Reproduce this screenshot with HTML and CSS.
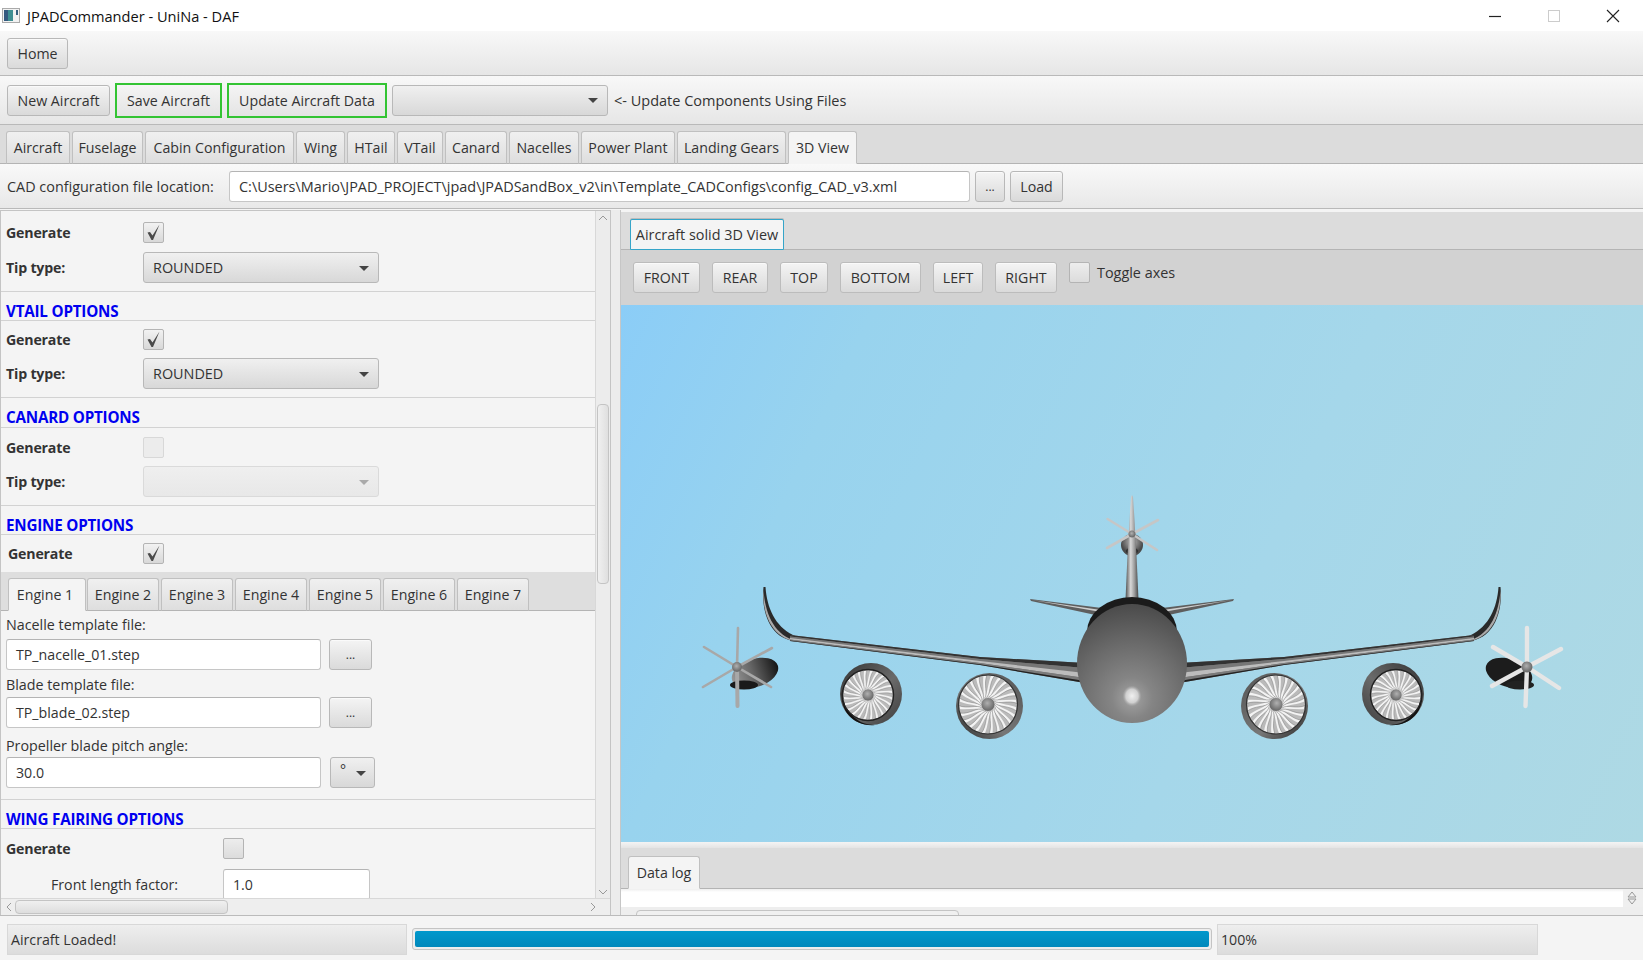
FILE: index.html
```html
<!DOCTYPE html>
<html lang="en">
<head>
<meta charset="utf-8">
<title>JPADCommander - UniNa - DAF</title>
<link rel="stylesheet" href="styles.css">
</head>
<body>
<div class="app">
  <header class="titlebar">
    <svg class="app-icon" width="18" height="15" viewBox="0 0 18 15"><rect x=".5" y=".5" width="17" height="14" fill="#f2f2f2" stroke="#aaa"/><rect x="2" y="2" width="9" height="11" fill="#3f8f92"/><rect x="2" y="2" width="4" height="11" fill="#34597f"/><rect x="14" y="2" width="2" height="5" fill="#36607f"/></svg>
    <span class="title-text">JPADCommander - UniNa - DAF</span>
    <div class="window-controls">
      <svg width="14" height="14" viewBox="0 0 14 14"><path d="M1 7.5h12" stroke="#222" stroke-width="1.2"/></svg>
      <svg width="14" height="14" viewBox="0 0 14 14"><rect x="1.5" y="1.5" width="11" height="11" fill="none" stroke="#ccc"/></svg>
      <svg width="14" height="14" viewBox="0 0 14 14"><path d="M1 1l12 12M13 1L1 13" stroke="#222" stroke-width="1.1"/></svg>
    </div>
  </header>

  <div class="bar bar-home"><button class="btn">Home</button></div>

  <div class="bar bar-actions">
    <button class="btn btn-new">New Aircraft</button>
    <button class="btn btn-green">Save Aircraft</button>
    <button class="btn btn-green">Update Aircraft Data</button>
    <div class="combo combo-files"><span class="arrow"></span></div>
    <span class="hint">&lt;- Update Components Using Files</span>
  </div>

  <nav class="tabbar main-tabs">
    <span class="tab t-aircraft">Aircraft</span><span class="tab t-fuselage">Fuselage</span><span class="tab t-cabin">Cabin Configuration</span><span class="tab t-wing">Wing</span><span class="tab t-htail">HTail</span><span class="tab t-vtail">VTail</span><span class="tab t-canard">Canard</span><span class="tab t-nacelles">Nacelles</span><span class="tab t-power">Power Plant</span><span class="tab t-gears">Landing Gears</span><span class="tab tab-active t-3d">3D View</span>
  </nav>

  <div class="bar bar-file">
    <span class="file-label">CAD configuration file location:</span>
    <div class="field file-field">C:\Users\Mario\JPAD_PROJECT\jpad\JPADSandBox_v2\in\Template_CADConfigs\config_CAD_v3.xml</div>
    <button class="btn btn-dots">...</button>
    <button class="btn btn-load">Load</button>
  </div>

  <main class="workspace">
    <section class="left-pane">
      <div class="left-view">
        <div class="left-content">
          <div class="group g-first">
            <div class="row"><b class="lbl">Generate</b><span class="check on"><svg width="19" height="19" viewBox="0 0 19 19"><path d="M3.500 9.500L6 9l2.500 3.500L15.500 1.500 9 17H7.500z" fill="#4a4a4a"/></svg></span></div>
            <div class="row"><b class="lbl">Tip type:</b><div class="combo combo-tip">ROUNDED<span class="arrow"></span></div></div>
          </div>
          <h3 class="head">VTAIL OPTIONS</h3>
          <div class="group g-vtail">
            <div class="row"><b class="lbl">Generate</b><span class="check on"><svg width="19" height="19" viewBox="0 0 19 19"><path d="M3.500 9.500L6 9l2.500 3.500L15.500 1.500 9 17H7.500z" fill="#4a4a4a"/></svg></span></div>
            <div class="row"><b class="lbl">Tip type:</b><div class="combo combo-tip">ROUNDED<span class="arrow"></span></div></div>
          </div>
          <h3 class="head head-tall">CANARD OPTIONS</h3>
          <div class="group g-canard">
            <div class="row"><b class="lbl">Generate</b><span class="check off"></span></div>
            <div class="row"><b class="lbl">Tip type:</b><div class="combo combo-tip disabled"><span class="arrow"></span></div></div>
          </div>
          <h3 class="head">ENGINE OPTIONS</h3>
          <div class="group g-engine">
            <div class="row"><b class="lbl lbl-engine">Generate</b><span class="check on"><svg width="19" height="19" viewBox="0 0 19 19"><path d="M3.500 9.500L6 9l2.500 3.500L15.500 1.500 9 17H7.500z" fill="#4a4a4a"/></svg></span></div>
          </div>
          <div class="tabbar engine-tabs">
            <span class="tab tab-active e1">Engine 1</span><span class="tab e">Engine 2</span><span class="tab e">Engine 3</span><span class="tab e">Engine 4</span><span class="tab e">Engine 5</span><span class="tab e">Engine 6</span><span class="tab e">Engine 7</span>
          </div>
          <div class="engine-body">
            <div class="cap cap-first">Nacelle template file:</div>
            <div class="pick"><div class="field engine-field">TP_nacelle_01.step</div><button class="btn btn-more">...</button></div>
            <div class="cap">Blade template file:</div>
            <div class="pick"><div class="field engine-field">TP_blade_02.step</div><button class="btn btn-more">...</button></div>
            <div class="cap cap-pitch">Propeller blade pitch angle:</div>
            <div class="pick"><div class="field engine-field">30.0</div><div class="combo combo-unit">°<span class="arrow"></span></div></div>
          </div>
          <h3 class="head">WING FAIRING OPTIONS</h3>
          <div class="group g-fairing">
            <div class="row fair-row"><b class="lbl">Generate</b><span class="check plain"></span></div>
            <div class="row fair-row"><span class="lbl-indent">Front length factor:</span><div class="field fair-field">1.0</div></div>
          </div>
        </div>
        <div class="vbar">
          <svg class="sb-arrow" width="14" height="12" viewBox="0 0 14 12"><path d="M3 8l4-4 4 4" fill="none" stroke="#999" stroke-width="1"/></svg>
          <div class="vtrack"><div class="vthumb"></div></div>
          <svg class="sb-arrow" width="14" height="12" viewBox="0 0 14 12"><path d="M3 4l4 4 4-4" fill="none" stroke="#999" stroke-width="1"/></svg>
        </div>
      </div>
      <div class="hbar">
        <svg width="10" height="14" viewBox="0 0 10 14"><path d="M8 3L4 7l4 4" fill="none" stroke="#999"/></svg>
        <div class="hthumb"></div>
        <svg class="hbar-right" width="10" height="14" viewBox="0 0 10 14"><path d="M3 3l4 4-4 4" fill="none" stroke="#999"/></svg>
      </div>
    </section>

    <div class="splitter"></div>

    <section class="right-pane">
      <div class="tabbar view-tabs"><span class="tab tab-focus">Aircraft solid 3D View</span></div>
      <div class="view-tools">
        <button class="btn v-front">FRONT</button>
        <button class="btn v-rear">REAR</button>
        <button class="btn v-top">TOP</button>
        <button class="btn v-bottom">BOTTOM</button>
        <button class="btn v-left">LEFT</button>
        <button class="btn v-right">RIGHT</button>
        <span class="check plain toggle"></span>
        <span class="toggle-label">Toggle axes</span>
      </div>
      <div class="canvas">
        <svg class="plane" width="1022" height="537" viewBox="621 305 1022 537" xmlns="http://www.w3.org/2000/svg">
          <defs>
            <radialGradient id="bodyG" gradientUnits="userSpaceOnUse" cx="1132" cy="698" r="92">
              <stop offset="0" stop-color="#a4a4a4"/><stop offset=".22" stop-color="#858585"/><stop offset=".6" stop-color="#6a6a6a"/><stop offset="1" stop-color="#4c4c4c"/>
            </radialGradient>
            <radialGradient id="spot"><stop offset="0" stop-color="#f0f0f0"/><stop offset=".65" stop-color="#d0d0d0"/><stop offset="1" stop-color="#aaa" stop-opacity="0"/></radialGradient>
            <radialGradient id="hubG" cx=".45" cy=".4"><stop offset="0" stop-color="#b0b0b0"/><stop offset="1" stop-color="#6e6e6e"/></radialGradient>
            <radialGradient id="nacTop" cx=".5" cy=".35"><stop offset="0" stop-color="#bbb"/><stop offset="1" stop-color="#4a4a4a"/></radialGradient>
            <linearGradient id="finG" x1="0" x2="1" y1="0" y2="0"><stop offset="0" stop-color="#4c4c4c"/><stop offset=".4" stop-color="#d8d8d8"/><stop offset=".7" stop-color="#999"/><stop offset="1" stop-color="#444"/></linearGradient>
            <linearGradient id="cowl" x1="0" x2="1" y1="0" y2="1"><stop offset="0" stop-color="#333"/><stop offset=".55" stop-color="#6a6a6a"/><stop offset="1" stop-color="#3c3c3c"/></linearGradient>
            <linearGradient id="cowlOuter" x1="1" x2="0" y1="0" y2="1"><stop offset="0" stop-color="#555"/><stop offset=".6" stop-color="#777"/><stop offset="1" stop-color="#2a2a2a"/></linearGradient>
            <linearGradient id="propNac" x1="0" x2="1" y1="0" y2="0"><stop offset="0" stop-color="#999"/><stop offset=".45" stop-color="#666"/><stop offset="1" stop-color="#151515"/></linearGradient>
            <filter id="soft" x="-5%" y="-20%" width="110%" height="140%"><feGaussianBlur stdDeviation=".6"/></filter>
            <clipPath id="wingClip"><path d="M1085 663L980 657L790 635L790 641L980 665L1085 683Z"/></clipPath>
            <path id="blade" d="M0-6C5-8 5-17 12-22.500L15-20.500C9-16 6-10 0-6Z" fill="#bababa"/>
            <path id="bladeEdge" d="M0-6C5-8 5-17 12-22.500" fill="none" stroke="#777" stroke-width=".4"/>
            <g id="bladeFull"><use href="#blade"/><use href="#bladeEdge"/></g>
            <g id="fan">
              <circle r="25" fill="#f3f3f3"/>
              <use href="#bladeFull"/><use href="#bladeFull" transform="rotate(15)"/><use href="#bladeFull" transform="rotate(30)"/><use href="#bladeFull" transform="rotate(45)"/><use href="#bladeFull" transform="rotate(60)"/><use href="#bladeFull" transform="rotate(75)"/><use href="#bladeFull" transform="rotate(90)"/><use href="#bladeFull" transform="rotate(105)"/><use href="#bladeFull" transform="rotate(120)"/><use href="#bladeFull" transform="rotate(135)"/><use href="#bladeFull" transform="rotate(150)"/><use href="#bladeFull" transform="rotate(165)"/><use href="#bladeFull" transform="rotate(180)"/><use href="#bladeFull" transform="rotate(195)"/><use href="#bladeFull" transform="rotate(210)"/><use href="#bladeFull" transform="rotate(225)"/><use href="#bladeFull" transform="rotate(240)"/><use href="#bladeFull" transform="rotate(255)"/><use href="#bladeFull" transform="rotate(270)"/><use href="#bladeFull" transform="rotate(285)"/><use href="#bladeFull" transform="rotate(300)"/><use href="#bladeFull" transform="rotate(315)"/><use href="#bladeFull" transform="rotate(330)"/><use href="#bladeFull" transform="rotate(345)"/>
              <circle r="6" fill="url(#hubG)" stroke="#d0d0d0" stroke-width=".6"/>
            </g>
            <g id="leftSide">
              <!-- winglet -->
              <path d="M763.500 587C761 612 770 637 793 641L795 641L795 636L793 635C775 626 767 608 765.500 587Z" fill="#2a2a2a"/>
              <path d="M763.500 590C762 612 771 636 793 641L793 640C773 633 765 612 763.500 590Z" fill="#aaa"/>
              <!-- tailplane -->
              <path d="M1030 599L1031 601L1100 616L1102 608Z" fill="#5e5e5e"/>
              <path d="M1032 600L1101 612L1101 610Z" fill="#cfcfcf"/>
              <!-- wing bands -->
              <path d="M1085 663L980 657L790 635L790 641L980 665L1085 683Z" fill="#777"/>
              <g clip-path="url(#wingClip)"><g filter="url(#soft)">
                <path d="M1085 660L980 655L790 634L790 636.500L980 659L1085 668Z" fill="#333"/>
                <path d="M1085 668L980 659L790 636.500L790 638L980 661L1085 673Z" fill="#767676"/>
                <path d="M1085 673L980 661L790 638L790 639.500L980 663L1085 678Z" fill="#bcbcbc"/>
                <path d="M1085 678L980 663L790 639.500L790 640.400L980 664.200L1085 681Z" fill="#7a7a7a"/>
                <path d="M1085 681L980 664.200L790 640.400L790 642L980 666L1085 685Z" fill="#222"/>
              </g></g>
              <!-- outer engine -->
              <ellipse cx="871" cy="694" rx="31" ry="31" fill="url(#cowl)"/>
              <path d="M842 690C839 712 855 727 875 725C855 725 845 710 845 692Z" fill="#111"/>
              <use href="#fan" transform="translate(868 695)"/>
              <circle cx="868" cy="695" r="25.500" fill="none" stroke="#222" stroke-width="1.400"/>
              <!-- inner engine -->
              <ellipse cx="989.500" cy="706" rx="33.500" ry="33" fill="url(#cowlOuter)"/>
              <use href="#fan" transform="translate(988 704.500) scale(1.160)"/>
              <circle cx="988" cy="704.500" r="29.500" fill="none" stroke="#333" stroke-width="1.200"/>
            </g>
          </defs>
          <use href="#leftSide"/>
          <use href="#leftSide" transform="translate(2264 0) scale(-1 1)"/>

          <!-- top prop nacelle, fin, blades -->
          <circle cx="1132" cy="545" r="11" fill="url(#nacTop)"/>
          <ellipse cx="1132" cy="551" rx="6" ry="3.500" fill="#2a2a2a"/>
          <path d="M1125.500 600L1127.500 555L1129.500 520L1131 497L1132 495L1133 497L1134.500 520L1136.500 555L1138.500 600Z" fill="url(#finG)"/>
          <g stroke="#c6c6c6" stroke-linecap="round" stroke-width="2.600">
            <path d="M1132 534L1107.600 519M1132 534L1158 520M1132 534L1107 548M1132 534L1157 550"/>
          </g>
          <circle cx="1132" cy="534" r="3.500" fill="url(#hubG)"/>
          <!-- fuselage -->
          <ellipse cx="1132" cy="632" rx="45" ry="35" fill="#1b1b1b"/>
          <ellipse cx="1132" cy="663.500" rx="55" ry="59.500" fill="url(#bodyG)"/>
          <ellipse cx="1132" cy="696" rx="9.500" ry="10.500" fill="url(#spot)"/>

          <!-- left prop -->
          <ellipse cx="755" cy="673" rx="24" ry="14" transform="rotate(-18 755 673)" fill="url(#propNac)"/>
          <ellipse cx="744" cy="685" rx="14" ry="4.500" fill="#1a1a1a"/>
          <g stroke="#a8a8a8" stroke-linecap="round" stroke-width="2.600">
            <path d="M737 667L738 628M737 667L704 647M737 667L772 648M737 667L703 687M737 667L771 687"/>
            <path d="M737 667L737.500 706" stroke-width="4"/>
          </g>
          <circle cx="737" cy="667" r="5" fill="url(#hubG)"/>

          <!-- right prop -->
          <ellipse cx="1509" cy="673" rx="24" ry="14" transform="rotate(18 1509 673)" fill="#1c1c1c"/>
          <ellipse cx="1520" cy="685" rx="14" ry="4.500" fill="#222"/>
          <g stroke="#e6e6e6" stroke-linecap="round" stroke-width="4.400">
            <path d="M1527 667L1527 628M1527 667L1561 649M1527 667L1559 688M1527 667L1525.500 706M1527 667L1492 686M1527 667L1493 647"/>
          </g>
          <circle cx="1527" cy="667" r="5.500" fill="url(#hubG)"/>
        </svg>
      </div>
      <div class="canvas-foot"></div>
      <div class="tabbar log-tabs"><span class="tab tab-active">Data log</span></div>
      <div class="log-body">
        <div class="log-white"></div>
        <svg class="log-spin" width="14" height="18" viewBox="0 0 14 18"><path d="M7 3l4 5H3zM7 15l4-5H3z" fill="none" stroke="#999"/></svg>
      </div>
      <div class="log-hbar"><div class="log-thumb"></div></div>
    </section>
  </main>

  <footer class="statusbar">
    <div class="status-msg">Aircraft Loaded!</div>
    <div class="progress"><div class="progress-fill"></div></div>
    <div class="status-pct">100%</div>
  </footer>
</div>
</body>
</html>
```

FILE: styles.css
```css
* { box-sizing: border-box; }
html, body { margin: 0; height: 100%; overflow: hidden; }
body { font-family: "Open Sans", "Liberation Sans", sans-serif; font-size: 14.200px; color: #333; background: #f4f4f4; }
.app { width: 1643px; height: 960px; display: flex; flex-direction: column; }

.titlebar { height: 31px; flex: none; background: #fff; display: flex; align-items: center; padding-left: 2px; color: #111; }
.app-icon { flex: none; }
.title-text { margin-left: 7px; font-size: 14.600px; }
.window-controls { margin-left: auto; display: flex; gap: 45px; padding-right: 23px; }

.bar { flex: none; display: flex; align-items: center; background: linear-gradient(#f8f8f8, #e6e6e6); border-bottom: 1px solid #b9b9b9; padding-left: 7px; }
.bar-home { height: 45px; }
.bar-actions { height: 49px; }
.bar-file { height: 45px; background: linear-gradient(#f9f9f9, #e8e8e8); }

.btn { font: inherit; color: #333; height: 31px; padding: 0; border: 1px solid #b8b8b8; border-radius: 3px; background: linear-gradient(#f4f4f4, #dadada); box-shadow: inset 0 1px 0 #fafafa; text-align: center; }
.bar-home .btn { width: 61px; }
.btn-new { width: 103px; }
.btn-green { height: 35px; margin-left: 5px; border: 2px solid #33c433; border-radius: 0; background: linear-gradient(#f4f4f4, #e4e4e4); box-shadow: none; }
.btn-green:nth-of-type(2) { width: 107px; }
.btn-green:nth-of-type(3) { width: 160px; }

.combo { position: relative; height: 31px; display: flex; align-items: center; border: 1px solid #b8b8b8; border-radius: 3px; background: linear-gradient(#f0f0f0, #d8d8d8); padding-left: 9px; }
.arrow { position: absolute; right: 9px; top: 50%; margin-top: -2px; width: 0; height: 0; border-left: 5px solid transparent; border-right: 5px solid transparent; border-top: 5px solid #444; }
.combo-files { width: 216px; margin-left: 5px; }
.hint { margin-left: 6px; font-size: 14.500px; }

.tabbar { display: flex; align-items: flex-end; flex: none; background: #dcdcdc; border-bottom: 1px solid #b4b4b4; }
.tab { flex: none; height: 33px; margin-bottom: -1px; border: 1px solid #c0c0c0; border-bottom-color: #b4b4b4; border-radius: 3px 3px 0 0; background: linear-gradient(#f0f0f0, #dedede); display: flex; align-items: center; justify-content: center; white-space: nowrap; color: #333; font-size: 14.200px; }
.tab-active { background: #f4f4f4; border-bottom-color: #f4f4f4; }
.main-tabs { height: 39px; padding-left: 6px; }
.main-tabs .tab { margin-right: 2px; }
.t-aircraft { width: 64px; } .t-fuselage { width: 71px; } .t-cabin { width: 149px; } .t-wing { width: 49px; } .t-htail { width: 48px; } .t-vtail { width: 46px; } .t-canard { width: 62px; } .t-nacelles { width: 70px; } .t-power { width: 94px; } .t-gears { width: 109px; } .t-3d { width: 69px; }

.field { height: 31px; background: #fff; border: 1px solid #c6c6c6; border-top-color: #b4b4b4; border-radius: 3px; display: flex; align-items: center; padding-left: 9px; white-space: nowrap; overflow: hidden; }
.file-label { width: 222px; font-size: 14.400px; }
.file-field { width: 741px; font-size: 14.450px; }
.btn-dots { width: 30px; margin-left: 5px; font-size: 12px; }
.btn-load { width: 53px; margin-left: 5px; }

.workspace { flex: 1; min-height: 0; display: flex; margin-top: 1px; border-bottom: 1px solid #bbb; }

.left-pane { width: 611px; flex: none; display: flex; flex-direction: column; border: 1px solid #c4c4c4; border-width: 1px 1px 0 1px; background: #f4f4f4; }
.left-view { flex: 1; min-height: 0; display: flex; }
.left-content { flex: 1; min-width: 0; overflow: hidden; padding-top: 1px; }
.group { padding: 10px 0 8px 5px; border-bottom: 1px solid #d2d2d2; display: flex; flex-direction: column; gap: 9px; }
.g-vtail { gap: 8px; padding-top: 8px; }
.g-canard { gap: 8px; padding-top: 9px; }
.g-engine { padding: 8px 0 8px 5px; border-bottom: 0; }
.g-fairing { border-bottom: 0; padding-top: 9px; gap: 10px; }
.row { display: grid; grid-template-columns: 137px auto; justify-content: start; align-items: center; }
.fair-row { grid-template-columns: 217px auto; }
.lbl { font-weight: 700; font-size: 14.200px; letter-spacing: -.2px; }
.lbl-engine { padding-left: 2px; }
.lbl-indent { padding-left: 45px; font-size: 14.200px; }
.head { margin: 0; height: 29px; padding: 10px 0 0 5px; font-size: 15.200px; line-height: 18px; font-weight: 700; color: #0000f0; letter-spacing: -.2px; border-bottom: 1px solid #d2d2d2; }
.head-tall { height: 30px; }

.check { width: 21px; height: 21px; display: block; border: 1px solid #b4b4b4; border-radius: 2px; background: linear-gradient(#f2f2f2, #d8d8d8); }
.check svg { display: block; }
.check.off { background: #ececec; border-color: #d8d8d8; }
.check.plain { background: linear-gradient(#ededed, #dcdcdc); }
.combo-tip { width: 236px; font-size: 14.400px; }
.combo.disabled { background: linear-gradient(#efefef, #e8e8e8); border-color: #dadada; }
.combo.disabled .arrow { border-top-color: #aaa; }

.engine-tabs { height: 39px; padding-left: 7px; background: #dedede; }
.engine-tabs .tab { margin-right: 2px; }
.e1 { width: 78px; padding-right: 4px; margin-right: 1px !important; }
.e { width: 72px; }

.engine-body { padding: 5px 0 5px 5px; border-bottom: 1px solid #d2d2d2; }
.cap { height: 20px; line-height: 18px; margin-bottom: 1px; font-size: 14.300px; }
.cap-first { margin-bottom: 3px; }
.cap-pitch { margin-top: 8px; line-height: 19px; }
.pick { display: flex; margin-bottom: 6px; }
.engine-field { width: 315px; }
.btn-more { width: 43px; margin-left: 8px; font-size: 12px; }
.combo-unit { width: 45px; margin-left: 9px; padding-left: 9px; align-items: flex-start; padding-top: 2px; }
.combo-unit .arrow { right: 8px; }
.fair-field { width: 147px; height: 31px; }

.vbar { width: 15px; flex: none; background: #ececec; border-left: 1px solid #d8d8d8; display: flex; flex-direction: column; align-items: center; }
.sb-arrow { flex: none; margin-top: 1px; }
.vtrack { flex: 1; width: 100%; position: relative; }
.vthumb { position: absolute; left: 1px; right: 1px; top: 180px; height: 180px; background: linear-gradient(90deg, #f0f0f0, #dfdfdf); border: 1px solid #c4c4c4; border-radius: 4px; }

.hbar { height: 17px; flex: none; background: #eeeeee; border-top: 1px solid #d8d8d8; display: flex; align-items: center; padding-left: 2px; }
.hthumb { width: 213px; height: 14px; margin-left: 2px; border: 1px solid #c4c4c4; border-radius: 4px; background: linear-gradient(#f0f0f0, #dedede); }
.hbar-right { margin-left: 360px; }

.splitter { width: 10px; flex: none; background: #ececec; border-right: 1px solid #c6c6c6; }

.right-pane { flex: 1; min-width: 0; display: flex; flex-direction: column; }
.view-tabs { height: 38px; padding-left: 9px; margin-top: 2px; }
.tab-focus { width: 154px; height: 31px; background: #f4f4f4; border: 1px solid #35a5c9; border-bottom-color: #35a5c9; border-radius: 2px 2px 0 0; box-shadow: 0 -1px 0 #bbb; font-size: 14.400px; }
.view-tools { height: 55px; flex: none; background: #d2d2d2; display: flex; align-items: flex-start; padding: 12px 0 0 12px; }
.view-tools .btn { margin-right: 12px; border-color: #bcbcbc; }
.v-front { width: 67px; } .v-rear { width: 56px; } .v-top { width: 48px; } .v-bottom { width: 81px; } .v-left { width: 50px; } .v-right { width: 62px; }
.toggle { flex: none; }
.toggle-label { margin-left: 7px; margin-top: 1px; font-size: 14.400px; }

.canvas { height: 537px; flex: none; background: linear-gradient(115deg, #8bcdf7 0%, #98d3ee 20%, #a5d7ea 60%, #aed9e4 100%); overflow: hidden; }
.plane { display: block; }
.canvas-foot { height: 6px; flex: none; background: linear-gradient(#f4f4f4, #e4e4e4); }
.log-tabs { height: 41px; padding-left: 7px; }
.log-tabs .tab { width: 72px; height: 33px; }
.log-body { height: 18px; flex: none; display: flex; background: #efefef; }
.log-white { width: 1002px; background: linear-gradient(#eeeeee 0, #fff 3px); }
.log-spin { margin-left: 2px; }
.log-hbar { flex: 1; min-height: 0; background: #eeeeee; overflow: hidden; padding: 3px 0 0 15px; }
.log-thumb { width: 323px; height: 14px; border: 1px solid #c4c4c4; border-radius: 4px; background: #f0f0f0; }

.statusbar { height: 44px; flex: none; display: flex; align-items: center; padding: 2px 0 0 7px; background: #f4f4f4; }
.status-msg, .status-pct { height: 31px; border: 1px solid #d8d8d8; background: linear-gradient(#eeeeee, #dcdcdc); display: flex; align-items: center; padding-left: 3px; }
.status-msg { width: 400px; }
.progress { width: 800px; height: 22px; margin-left: 5px; border: 1px solid #c4c4c4; border-radius: 3px; padding: 2px; background: #ededed; }
.progress-fill { height: 100%; background: linear-gradient(#0098cc, #0088bb); border-radius: 2px; }
.status-pct { width: 321px; margin-left: 5px; }
```
